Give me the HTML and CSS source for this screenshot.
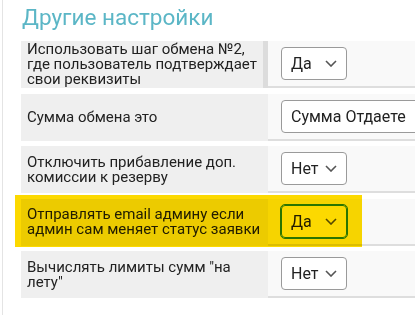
FILE: index.html
```html
<!DOCTYPE html>
<html lang="ru">
<head>
  <meta charset="UTF-8">
  <meta name="viewport" content="width=device-width, initial-scale=1.0">
  <title>Другие настройки</title>
  <link rel="stylesheet" href="styles.css">
</head>
<body>
  <div class="panel">
    <h2 class="title">Другие настройки</h2>

    <div class="rows">
      <!-- шаг обмена -->
      <div class="row first">
        <div class="label">Использовать шаг обмена №2, где пользователь подтверждает свои реквизиты</div>
        <div class="field">
          <div class="select"><span>Да</span><svg width="12" height="7" viewBox="0 0 12 7"><polyline points="1,1 6,6 11,1" /></svg></div>
        </div>
      </div>

      <div class="row">
        <div class="label">Сумма обмена это</div>
        <div class="field">
          <div class="select wide"><span>Сумма Отдаете</span></div>
        </div>
      </div>

      <div class="row">
        <div class="label">Отключить прибавление доп. комиссии к резерву</div>
        <div class="field">
          <div class="select"><span>Нет</span><svg width="12" height="7" viewBox="0 0 12 7"><polyline points="1,1 6,6 11,1" /></svg></div>
        </div>
      </div>

      <!-- выделенная строка -->
      <div class="row hl">
        <div class="label">Отправлять email админу если админ сам меняет статус заявки</div>
        <div class="field">
          <div class="select"><span>Да</span><svg width="12" height="7" viewBox="0 0 12 7"><polyline points="1,1 6,6 11,1" /></svg></div>
        </div>
      </div>

      <div class="row">
        <div class="label">Вычислять лимиты сумм "на лету"</div>
        <div class="field">
          <div class="select"><span>Нет</span><svg width="12" height="7" viewBox="0 0 12 7"><polyline points="1,1 6,6 11,1" /></svg></div>
        </div>
      </div>
    </div>
  </div>
</body>
</html>
```

FILE: styles.css
```css
html,
body {
  margin: 0;
  overflow: hidden;
  background: #fff;
}
body {
  font-family: Roboto, "Noto Sans", sans-serif;
  color: #222;
}
.panel {
  margin-left: 2px;
  border-left: 1px solid #e4e4e4;
  padding-left: 18px;
  min-height: 315px;
}
.title {
  margin: 0;
  box-sizing: border-box;
  height: 41px;
  padding: 4px 0 0 1px;
  font-size: 22.5px;
  line-height: 26px;
  font-weight: 400;
  color: #5bb6c6;
}
.rows {
  display: flex;
  flex-direction: column;
  gap: 5.5px;
}
.row {
  display: grid;
  grid-template-columns: 247px 200px;
  height: 47px;
}
.label {
  box-sizing: border-box;
  display: flex;
  align-items: center;
  padding: 0 6px;
  background: #efefef;
  font-size: 15px;
  line-height: 15px;
}
.first .label {
  border-right: 5px solid #dcdcdc;
}
.field {
  display: flex;
  align-items: center;
  padding-left: 13px;
  background: #f9f9f9;
  border-bottom: 2px solid #dedede;
}
.select {
  box-sizing: border-box;
  display: flex;
  align-items: center;
  justify-content: space-between;
  width: 66px;
  height: 33px;
  padding: 0 9px;
  border: 1px solid #9a9a9a;
  border-radius: 4px;
  background: #fff;
  font-size: 16px;
  white-space: nowrap;
}
.select.wide {
  width: 170px;
}
.select svg polyline {
  fill: none;
  stroke: #555;
  stroke-width: 1.6;
}

/* подсветка строки */
.row.hl {
  position: relative;
}
.row.hl::after {
  content: "";
  position: absolute;
  left: -6px;
  top: -4px;
  width: 347px;
  height: 52px;
  background: #fcd900;
  mix-blend-mode: multiply;
  pointer-events: none;
}
.hl .select {
  border-color: #2a8a12;
  outline: 1px solid #2a8a12;
}
```
